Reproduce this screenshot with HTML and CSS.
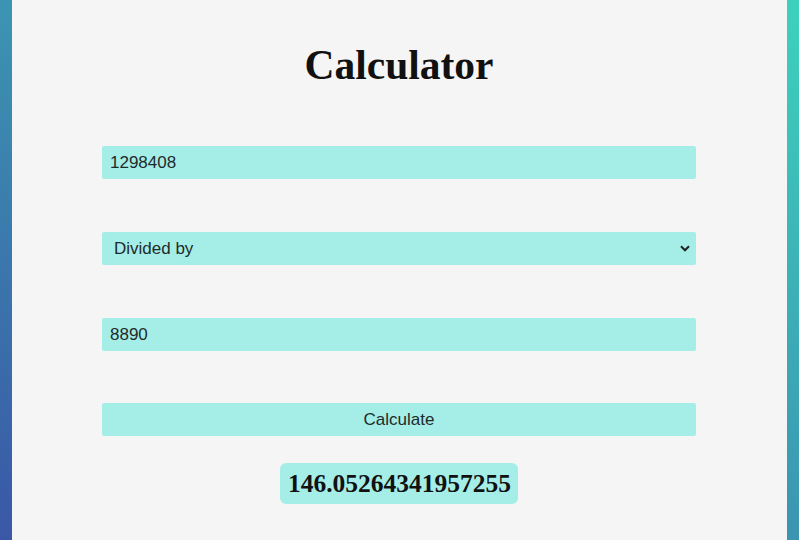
FILE: index.html
```html
<!DOCTYPE html>
<html lang="en">
<head>
<meta charset="utf-8">
<title>Calculator</title>
<link rel="stylesheet" href="styles.css">
</head>
<body>
<main class="panel">
  <h1 class="title">Calculator</h1>
  <form class="calc-form">
    <input class="field" type="text" value="1298408">
    <select class="field field-select">
      <option>Plus</option>
      <option>Minus</option>
      <option>Times</option>
      <option selected>Divided by</option>
    </select>
    <input class="field" type="text" value="8890">
    <button class="field calc-btn" type="button">Calculate</button>
  </form>
  <div class="result-row">
    <div class="result">146.05264341957255</div>
  </div>
</main>
</body>
</html>
```

FILE: styles.css
```css
html, body {
  margin: 0;
  height: 100%;
}
body {
  background: linear-gradient(to top right, #3a57a6, #3dd2bd);
  padding: 0 12px;
  box-sizing: border-box;
  font-family: "Liberation Sans", Arial, sans-serif;
}
.panel {
  background: #f5f5f5;
  min-height: 100%;
  box-sizing: border-box;
  padding: 42px 91px 0 90px;
}
.title {
  margin: 0;
  font-family: "Liberation Serif", "Times New Roman", serif;
  font-weight: bold;
  font-size: 41.5px;
  line-height: 47px;
  text-align: center;
  color: #111;
}
.calc-form {
  margin-top: 57px;
  display: flex;
  flex-direction: column;
  gap: 53px;
}
.field {
  display: block;
  width: 100%;
  height: 33px;
  box-sizing: border-box;
  border: 0;
  border-radius: 2px;
  background: #a5eee7;
  color: #1f2b2b;
  font-family: "Liberation Sans", Arial, sans-serif;
  font-size: 17px;
  padding: 0 8px;
  margin: 0;
  outline: none;
}
.field-select {
  appearance: none;
  -webkit-appearance: none;
  padding-left: 12px;
  background-image: url("data:image/svg+xml,%3Csvg xmlns='http://www.w3.org/2000/svg' width='10' height='7' viewBox='0 0 10 7'%3E%3Cpath d='M1 1.2 L5 5.2 L9 1.2' fill='none' stroke='%23222' stroke-width='2.1'/%3E%3C/svg%3E");
  background-repeat: no-repeat;
  background-position: right 6px center;
  background-size: 10px 7px;
}
.calc-btn {
  text-align: center;
  cursor: pointer;
  height: 33px;
  margin-top: -1px;
}
.result-row {
  display: flex;
  justify-content: center;
  margin-top: 27px;
}
.result {
  background: #a5eee7;
  border-radius: 6px;
  padding: 6px 7px 6px 8px;
  font-family: "Liberation Serif", "Times New Roman", serif;
  font-weight: bold;
  font-size: 25.5px;
  line-height: 29px;
  color: #111;
}
```
